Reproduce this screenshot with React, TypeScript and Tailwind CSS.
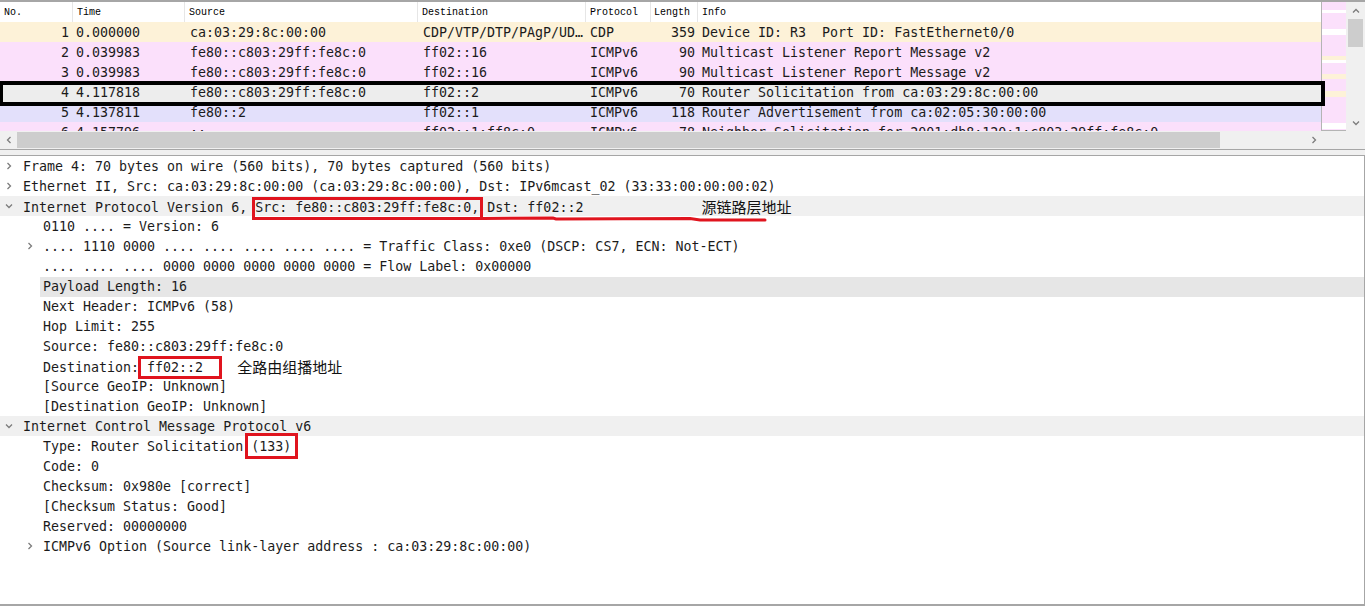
import React from "react";

type Packet = {
  no: string;
  time: string;
  src: string;
  dst: string;
  proto: string;
  len: string;
  info: string;
  bg: string;
};

const packets: Packet[] = [
  { no: "1", time: "0.000000", src: "ca:03:29:8c:00:00", dst: "CDP/VTP/DTP/PAgP/UD…", proto: "CDP", len: "359", info: "Device ID: R3  Port ID: FastEthernet0/0", bg: "bg-[#fdf2d8]" },
  { no: "2", time: "0.039983", src: "fe80::c803:29ff:fe8c:0", dst: "ff02::16", proto: "ICMPv6", len: "90", info: "Multicast Listener Report Message v2", bg: "bg-[#fbe0fb]" },
  { no: "3", time: "0.039983", src: "fe80::c803:29ff:fe8c:0", dst: "ff02::16", proto: "ICMPv6", len: "90", info: "Multicast Listener Report Message v2", bg: "bg-[#fbe0fb]" },
  { no: "4", time: "4.117818", src: "fe80::c803:29ff:fe8c:0", dst: "ff02::2", proto: "ICMPv6", len: "70", info: "Router Solicitation from ca:03:29:8c:00:00", bg: "bg-[#ededed]" },
  { no: "5", time: "4.137811", src: "fe80::2", dst: "ff02::1", proto: "ICMPv6", len: "118", info: "Router Advertisement from ca:02:05:30:00:00", bg: "bg-[#e3e0fb]" },
  { no: "6", time: "4.157796", src: "::", dst: "ff02::1:ff8c:0", proto: "ICMPv6", len: "78", info: "Neighbor Solicitation for 2001:db8:120:1:c803:29ff:fe8c:0", bg: "bg-[#fbe0fb]" },
];

// minimap stripes: [top, height, colour]
const stripes: [number, number, string][] = [
  [8, 3, "#ffffff"],
  [27, 6, "#ffffff"],
  [54, 4, "#fdf2d8"],
  [58, 3, "#ffffff"],
  [72, 5, "#fdf2d8"],
  [89, 6, "#fdf2d8"],
  [121, 6, "#ffffff"],
];

const Chevron = ({ dir }: { dir: "right" | "down" | "left" | "up" }) => {
  const d =
    dir === "right"
      ? "M2.5 1 L5.5 4 L2.5 7"
      : dir === "left"
      ? "M5.5 1 L2.5 4 L5.5 7"
      : dir === "up"
      ? "M1 5.5 L4 2.5 L7 5.5"
      : "M1 2.5 L4 5.5 L7 2.5";
  return (
    <svg width="8" height="8" viewBox="0 0 8 8" fill="none">
      <path d={d} stroke="#7c7c7c" strokeWidth="1.3" />
    </svg>
  );
};

const cols = "grid grid-cols-[73px_112px_233px_168px_65px_47px_1fr]";

const RedBox = ({ children, cls }: { children: React.ReactNode; cls: string }) => (
  <span className="relative inline-block h-5">
    {children}
    <span className={"absolute border-[3px] border-[#e0141e] " + cls} />
  </span>
);

const Note = ({ children, cls }: { children: React.ReactNode; cls: string }) => (
  <span className={"font-['Noto_Sans_CJK_SC',sans-serif] text-[15px] text-[#111] relative top-[1px] " + cls}>
    {children}
  </span>
);

type Line = {
  level: 0 | 1;
  arrow?: "right" | "down";
  hl?: "full" | "text";
  body: React.ReactNode;
  extra?: React.ReactNode;
};

const lines: Line[] = [
  { level: 0, arrow: "right", body: "Frame 4: 70 bytes on wire (560 bits), 70 bytes captured (560 bits)" },
  { level: 0, arrow: "right", body: "Ethernet II, Src: ca:03:29:8c:00:00 (ca:03:29:8c:00:00), Dst: IPv6mcast_02 (33:33:00:00:00:02)" },
  {
    level: 0,
    arrow: "down",
    hl: "full",
    body: (
      <>
        {"Internet Protocol Version 6, "}
        <RedBox cls="-left-[3px] -right-[4px] -top-px -bottom-[2px]">Src: fe80::c803:29ff:fe8c:0,</RedBox>
        {" Dst: ff02::2"}
        <Note cls="ml-[118px]">源链路层地址</Note>
      </>
    ),
    extra: (
      <svg className="absolute left-0 top-0" width="800" height="26" fill="none">
        <path d="M483 22.5 L553 22 L556 23 L690 22.5 L700 24 L765 24" stroke="#e0141e" strokeWidth="3" strokeLinecap="round" />
      </svg>
    ),
  },
  { level: 1, body: "0110 .... = Version: 6" },
  { level: 1, arrow: "right", body: ".... 1110 0000 .... .... .... .... .... = Traffic Class: 0xe0 (DSCP: CS7, ECN: Not-ECT)" },
  { level: 1, body: ".... .... .... 0000 0000 0000 0000 0000 = Flow Label: 0x00000" },
  { level: 1, hl: "text", body: "Payload Length: 16" },
  { level: 1, body: "Next Header: ICMPv6 (58)" },
  { level: 1, body: "Hop Limit: 255" },
  { level: 1, body: "Source: fe80::c803:29ff:fe8c:0" },
  {
    level: 1,
    body: (
      <>
        {"Destination: "}
        <RedBox cls="-left-[9px] -right-[19px] -top-[2px] -bottom-[1px]">ff02::2</RedBox>
        <Note cls="ml-[34px]">全路由组播地址</Note>
      </>
    ),
  },
  { level: 1, body: "[Source GeoIP: Unknown]" },
  { level: 1, body: "[Destination GeoIP: Unknown]" },
  { level: 0, arrow: "down", hl: "full", body: "Internet Control Message Protocol v6" },
  {
    level: 1,
    body: (
      <>
        {"Type: Router Solicitation "}
        <RedBox cls="-left-[6px] -right-[7px] -top-[4px] -bottom-[2px]">(133)</RedBox>
      </>
    ),
  },
  { level: 1, body: "Code: 0" },
  { level: 1, body: "Checksum: 0x980e [correct]" },
  { level: 1, body: "[Checksum Status: Good]" },
  { level: 1, body: "Reserved: 00000000" },
  { level: 1, arrow: "right", body: "ICMPv6 Option (Source link-layer address : ca:03:29:8c:00:00)" },
];

export default function App() {
  return (
    <div className="w-[1365px] h-[606px] overflow-hidden bg-white text-[#1b1b1b] font-['DejaVu_Sans_Mono',monospace]">
      {/* packet list */}
      <div className="border-t-2 border-b border-[#a6a6a6]">
        <div className="relative flex h-[129px]">
          <div className="w-[1321px] overflow-hidden">
            <div className={cols + " h-5 items-center bg-white text-[10px] text-black font-['Liberation_Mono',monospace]"}>
              <div className="pl-1 border-r border-[#e6e6e6] h-full flex items-center">No.</div>
              <div className="pl-1 border-r border-[#e6e6e6] h-full flex items-center">Time</div>
              <div className="pl-1 border-r border-[#e6e6e6] h-full flex items-center">Source</div>
              <div className="pl-1 border-r border-[#e6e6e6] h-full flex items-center">Destination</div>
              <div className="pl-1 border-r border-[#e6e6e6] h-full flex items-center">Protocol</div>
              <div className="pl-[3px] border-r border-[#e6e6e6] h-full flex items-center">Length</div>
              <div className="pl-1 h-full flex items-center">Info</div>
            </div>
            {packets.map((p) => (
              <div key={p.no} className={cols + " h-5 whitespace-pre text-[13.3px] leading-5 pt-px " + p.bg}>
                <div className="text-right pr-[4px]">{p.no}</div>
                <div className="pl-[3px]">{p.time}</div>
                <div className="pl-[5px]">{p.src}</div>
                <div className="pl-[5px] overflow-hidden">{p.dst}</div>
                <div className="pl-[4px]">{p.proto}</div>
                <div className="text-right pr-[3px]">{p.len}</div>
                <div className="pl-[4px]">{p.info}</div>
              </div>
            ))}
          </div>
          {/* minimap */}
          <div className="relative w-[25px] bg-[#fbe0fb] border-l border-b border-[#b4b4b4]">
            {stripes.map(([t, h, c], i) => (
              <div key={i} className="absolute left-0 right-0" style={{ top: t, height: h, background: c }} />
            ))}
          </div>
          {/* vertical scrollbar */}
          <div className="w-[19px] bg-[#f0f0f0] flex flex-col items-center">
            <div className="h-[17px] flex items-center justify-center">
              <Chevron dir="up" />
            </div>
            <div className="w-[15px] h-[28px] bg-[#cdcdcd]" />
            <div className="flex-1" />
            <div className="h-[17px] flex items-center justify-center">
              <Chevron dir="down" />
            </div>
          </div>
          {/* selected packet frame */}
          <div className="absolute left-0 top-[79px] w-[1325px] h-[25px] border-4 border-l-[3px] border-black" />
        </div>
        {/* horizontal scrollbar */}
        <div className="flex h-[18px] bg-[#f0f0f0]">
          <div className="w-[17px] flex items-center justify-center">
            <Chevron dir="left" />
          </div>
          <div className="w-[1203px] my-[1px] bg-[#cdcdcd]" />
          <div className="flex-1" />
          <div className="w-[17px] flex items-center justify-center mr-[26px]">
            <Chevron dir="right" />
          </div>
          <div className="w-[17px]" />
        </div>
      </div>
      {/* splitter */}
      <div className="h-[5px] bg-[#f0f0f0]" />
      {/* packet details */}
      <div className="h-[451px] border-t border-b-2 border-r border-[#a6a6a6] text-[13.3px] leading-5">
        {lines.map((l, i) => (
          <div
            key={i}
            className={
              "relative flex h-5 items-center whitespace-pre " +
              (l.hl === "full" ? "bg-[#f0f0f0] " : "") +
              (l.level === 1 ? "pl-[20px]" : "")
            }
          >
            <span className={"w-[23px] flex items-center " + (l.level === 1 ? "pl-[6px]" : "pl-[5px]")}>
              {l.arrow && <Chevron dir={l.arrow} />}
            </span>
            <span className={"relative top-px " + (l.hl === "text" ? "flex-1 bg-[#e6e6e6] -ml-[3px] pl-[3px]" : "")}>
              {l.body}
            </span>
            {l.extra}
          </div>
        ))}
      </div>
    </div>
  );
}
